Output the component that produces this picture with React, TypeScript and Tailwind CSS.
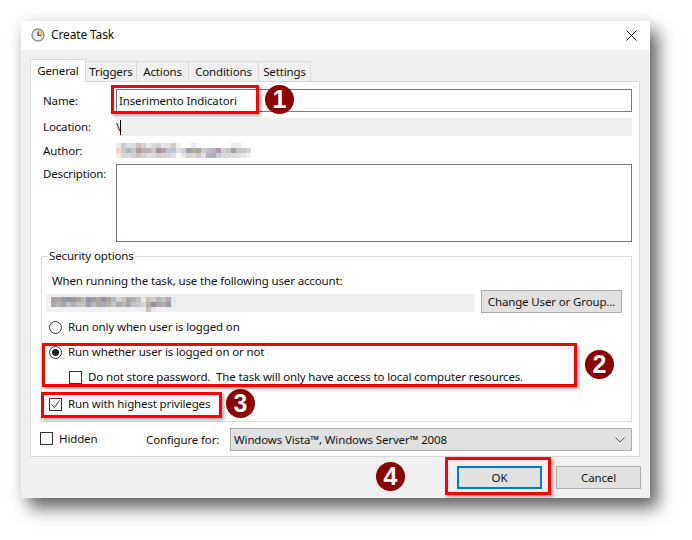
const fieldClass = "border border-[#7a7a7a] bg-white";

// pixelated redactions from the screenshot, one row of 5px cells per line
const authorCells = [
  "f0e8e4 c8ccd0 dcdfe2 d8dde0 c9c2bd dad2cf e3eef0 dcd9d2 d2ccd4 eadfe4 e3dfe2 cfcdc6 f2f0ec ffffff ffffff f6e4ea f6fbff ffffff ffffff ffffff ffffff ffffff ffffff ededed f0e8e8 f8fbff ffffff",
  "ecd2cc cdc8c8 aeb8c0 c6c8c6 a89c98 bfb0b0 b8b0b8 ccc8c0 a090a4 b0a4a8 c4c4c4 c2c2d4 dedede cfcfcf a89ca8 b0b0ac a8a898 c8c8d0 c0c0cc bcb8b8 b09cb0 d0d0d0 ccc4c8 a89ca4 c4c8c8 c8c8cc d4d8dc",
  "f4e8e4 d8d8d8 dadcdc d0d0d0 c4c4c8 d4d0d4 dce0e4 dcdcd8 d4ccd8 d8d4d8 d8d8d8 e0e0ec f8f8f8 e8e4e4 d8d4d8 dcd8d8 cccac0 dcdce0 b0b4bc a8b0b8 ccccd0 d8d8d8 dcdce0 e0dce0 e0e0e0 e8e8e8 f0f0f0",
];

const accountCells = [
  "a8a4a4 aca8a8 a49898 8c98a8 a09898 a8a4a0 bcbcb0 9494a8 a09ca0 b0a8a8 9c90a8 a4a4a0 b0b8c0 d8d4cc c8c4c0 a8a8a0 b4b0ac c4c4c8 e8e8e8 c8c4b8 d0d0d0 b8b4b8 c8c4c4 b4acb0 e0e8f0 f0f0f0",
  "aca8a8 b8b4b4 aca4a8 b8c0c8 b0b0b0 c0c0c0 c4c4b4 a49cb4 bcb8b8 a8a8a0 b0a8b4 b4b4ac c4c8cc a8a8a8 b8b8b4 a8a4ac c8bcc8 c4c8cc d4d4d4 b8b4a8 9090a0 a8a4a8 b0acb0 a09ca0 e4ecf4 f0f0f0",
  "f0f0f0 f0f0f0 f0f0f0 f0f0f0 f0f0f0 f0f0f0 f0f0f0 f0f0f0 f0f0f0 f0f0f0 f0f0f0 f0f0f0 f0f0f0 f0f0f0 f0f0f0 f0f0f0 f0f0f0 f0f0f0 f0f0f0 c8c4b8 e4e8ec f0f0f0 f0f0f0 f0f0f0 f0f0f0 f0f0f0",
];

function Mosaic({ rows }: { rows: string[] }) {
  const cell = 5;
  return (
    <svg width={rows[0].split(" ").length * cell} height={rows.length * cell} shapeRendering="crispEdges" className="shrink-0">
      {rows.map((row, y) =>
        row.split(" ").map((c, x) => <rect key={`${x}-${y}`} x={x * cell} y={y * cell} width={cell} height={cell} fill={`#${c}`} />),
      )}
    </svg>
  );
}

function Callout({ n, className }: { n: number; className: string }) {
  return (
    <div className={`absolute flex h-[29px] w-[29px] items-center justify-center rounded-full bg-[#8b0000] font-['Liberation_Sans',sans-serif] text-[25px] leading-none font-bold tracking-normal text-white ${className}`}>
      {n}
    </div>
  );
}

function Tab({ label, className }: { label: string; className: string }) {
  return <div className={`flex items-center justify-center border border-b-0 border-[#d9d9d9] ${className}`}>{label}</div>;
}

const redBox = "absolute border-[3px] border-[#f00] shadow-[2px_2px_3px_rgba(0,0,0,0.35)]";

export default function App() {
  return (
    <div className="h-[540px] w-[692px] overflow-hidden bg-white pt-[21px] pl-[21px] font-['Noto_Sans',sans-serif] text-[11.5px] tracking-[-0.14px] text-[#111]">
      <div className="relative flex h-[477px] w-[629px] flex-col bg-[#f0f0f0] shadow-[8px_10px_16px_rgba(0,0,0,0.6),0_0_14px_rgba(0,0,0,0.08)]">
        {/* title bar */}
        <div className="flex h-[29px] items-center bg-white pr-[13px] pb-[1px] pl-[10px]">
          <svg width="14" height="14" viewBox="0 0 14 14">
            <circle cx="7" cy="7" r="6" fill="#e8eef2" stroke="#8f8f8f" strokeWidth="1.4" />
            <path d="M7 7V2a5 5 0 0 1 5 5z" fill="#e8c46a" />
            <path d="M7 3.5V7.5H10.5" fill="none" stroke="#44505a" strokeWidth="1.2" />
          </svg>
          <span className="ml-[6px] text-[12px]">Create Task</span>
          <svg className="ml-auto" width="11" height="11" viewBox="0 0 11 11">
            <path d="M.5.5l10 10M10.5.5l-10 10" stroke="#111" strokeWidth="1" />
          </svg>
        </div>

        {/* tabs */}
        <div className="flex h-[31px] items-end pl-[9px]">
          <Tab label="General" className="relative z-10 -mb-px h-[23px] w-[56px] bg-white pb-[1px]" />
          <Tab label="Triggers" className="h-[20px] w-[51px] border-l-0" />
          <Tab label="Actions" className="h-[20px] w-[52px] border-l-0" />
          <Tab label="Conditions" className="h-[20px] w-[70px] border-l-0" />
          <Tab label="Settings" className="h-[20px] w-[52px] border-l-0" />
        </div>

        {/* panel */}
        <div className="mx-[9px] flex h-[376px] w-[610px] flex-col border border-[#d9d9d9] bg-white pt-[7px] pr-[7px] pl-[12px]">
          <div className="flex h-[23px] items-center">
            <span className="w-[73px]">Name:</span>
            <div className={`flex h-[23px] flex-1 items-center px-[2px] ${fieldClass}`}>Inserimento Indicatori</div>
          </div>
          <div className="mt-[6px] flex h-[18px] items-center">
            <span className="w-[73px]">Location:</span>
            <div className="flex h-[18px] flex-1 items-center bg-[#f0f0f0]">
              \<span className="h-[15px] w-px bg-black" />
            </div>
          </div>
          <div className="mt-[7px] flex h-[15px] items-center">
            <span className="w-[73px]">Author:</span>
            <Mosaic rows={authorCells} />
          </div>
          <div className="mt-[6px] flex h-[78px] items-start">
            <span className="w-[73px] pt-[1px]">Description:</span>
            <div className={`h-[78px] flex-1 ${fieldClass}`} />
          </div>

          {/* security group */}
          <fieldset className="mt-[6px] ml-[-2px] h-[174px] border border-[#dcdcdc] pr-[9px] pl-[4px]">
            <legend className="ml-[2px] px-[1px] leading-[16px]">Security options</legend>
            <div className="mt-[9px] ml-[6px] leading-[16px]">When running the task, use the following user account:</div>
            <div className="mt-[1px] flex items-start justify-between">
              <div className="mt-[4px] h-[18px] w-[429px] bg-[#f0f0f0] pt-[3px] pl-[5px]">
                <Mosaic rows={accountCells} />
              </div>
              <button className="h-[23px] w-[141px] border border-[#adadad] bg-[#e1e1e1] text-center">Change User or Group...</button>
            </div>
            <div className="mt-[6px] flex h-[16px] items-center pl-[3px]">
              <span className="h-[13px] w-[13px] rounded-full border border-[#333]" />
              <span className="ml-[6px]">Run only when user is logged on</span>
            </div>
            <div className="mt-[9px] flex h-[16px] items-center pl-[3px]">
              <span className="flex h-[13px] w-[13px] items-center justify-center rounded-full border border-[#333]">
                <span className="h-[7px] w-[7px] rounded-full bg-[#222]" />
              </span>
              <span className="ml-[6px]">Run whether user is logged on or not</span>
            </div>
            <div className="mt-[9px] flex h-[16px] items-center pl-[23px]">
              <span className="h-[13px] w-[13px] border border-[#333]" />
              <span className="ml-[6px]">Do not store password.&nbsp; The task will only have access to local computer resources.</span>
            </div>
            <div className="mt-[11px] flex h-[16px] items-center pl-[3px]">
              <span className="flex h-[13px] w-[13px] items-center justify-center border border-[#333]">
                <svg width="11" height="11" viewBox="0 0 11 11">
                  <path d="M1.5 5.5l3 3 5-7" fill="none" stroke="#333" strokeWidth="1" />
                </svg>
              </span>
              <span className="ml-[6px]">Run with highest privileges</span>
            </div>
          </fieldset>

          <div className="mt-[6px] flex h-[23px] items-center">
            <span className="-mt-[2px] -ml-[3px] h-[13px] w-[13px] border border-[#333]" />
            <span className="-mt-[2px] ml-[6px] w-[87px]">Hidden</span>
            <span className="w-[84px]">Configure for:</span>
            <div className="flex h-[23px] flex-1 items-center justify-between border border-[#adadad] bg-[#e1e1e1] pr-[6px] pl-[3px]">
              Windows Vista™, Windows Server™ 2008
              <svg width="10" height="6" viewBox="0 0 10 6">
                <path d="M.5.5L5 5 9.5.5" fill="none" stroke="#555" strokeWidth="1" />
              </svg>
            </div>
          </div>
        </div>

        {/* footer buttons */}
        <div className="flex flex-1 items-start justify-end gap-[14px] pt-[9px] pr-[9px]">
          <button className="h-[23px] w-[85px] border-2 border-[#0078d7] bg-[#e1e1e1]">OK</button>
          <button className="h-[23px] w-[85px] border border-[#adadad] bg-[#e1e1e1]">Cancel</button>
        </div>

        {/* annotations */}
        <div className={`${redBox} top-[64px] left-[90px] h-[29px] w-[148px]`} />
        <div className={`${redBox} top-[322px] left-[21px] h-[44px] w-[535px]`} />
        <div className={`${redBox} top-[371px] left-[20px] h-[26px] w-[181px]`} />
        <div className={`${redBox} top-[436px] left-[424px] h-[38px] w-[106px]`} />
        <Callout n={1} className="top-[64px] left-[244px]" />
        <Callout n={2} className="top-[329px] left-[564px]" />
        <Callout n={3} className="top-[368px] left-[205px]" />
        <Callout n={4} className="top-[441px] left-[355px]" />
      </div>
    </div>
  );
}
